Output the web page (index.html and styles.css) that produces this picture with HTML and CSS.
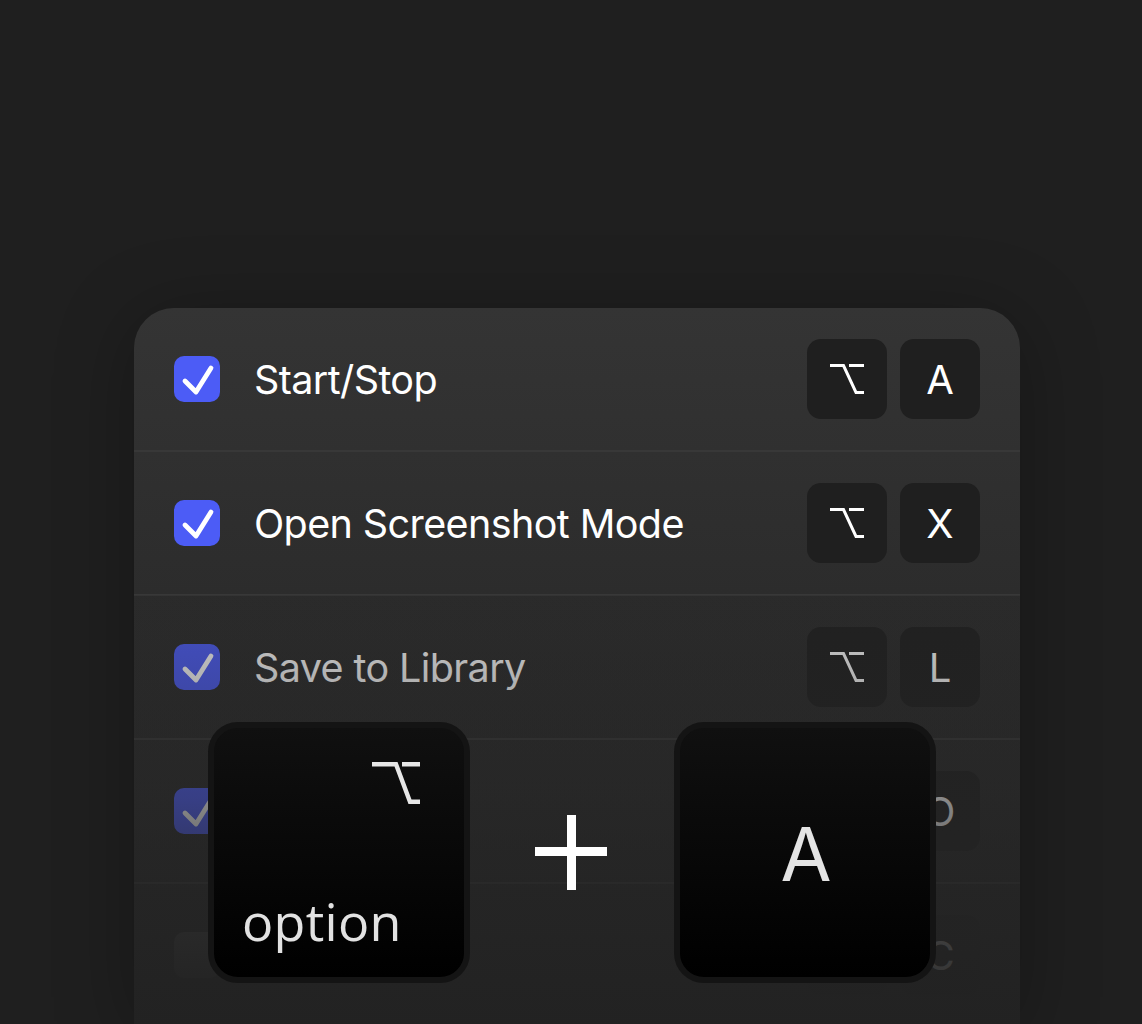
FILE: index.html
```html
<!DOCTYPE html>
<html>
<head>
<meta charset="utf-8">
<link rel="stylesheet" href="styles.css">
</head>
<body>
<div class="stage">
  <div class="panel">
    <div class="row">
      <span class="check on"><svg viewBox="0 0 46 46" width="46" height="46"><path d="M11 26 L22 37 L37 13" transform="translate(0,-1)"/></svg></span>
      <span class="label">Start/Stop</span>
      <span class="keys"><span class="key"><svg class="opt" viewBox="0 0 34 30" width="34" height="30"><path d="M0 1.5 H13.5 L26 28.5 H34 M19 1.5 H34"/></svg></span><span class="key">A</span></span>
    </div>
    <div class="row">
      <span class="check on"><svg viewBox="0 0 46 46" width="46" height="46"><path d="M11 26 L22 37 L37 13" transform="translate(0,-1)"/></svg></span>
      <span class="label">Open Screenshot Mode</span>
      <span class="keys"><span class="key"><svg class="opt" viewBox="0 0 34 30" width="34" height="30"><path d="M0 1.5 H13.5 L26 28.5 H34 M19 1.5 H34"/></svg></span><span class="key">X</span></span>
    </div>
    <div class="row">
      <span class="check on"><svg viewBox="0 0 46 46" width="46" height="46"><path d="M11 26 L22 37 L37 13" transform="translate(0,-1)"/></svg></span>
      <span class="label">Save to Library</span>
      <span class="keys"><span class="key"><svg class="opt" viewBox="0 0 34 30" width="34" height="30"><path d="M0 1.5 H13.5 L26 28.5 H34 M19 1.5 H34"/></svg></span><span class="key">L</span></span>
    </div>
    <div class="row">
      <span class="check on"><svg viewBox="0 0 46 46" width="46" height="46"><path d="M11 26 L22 37 L37 13" transform="translate(0,-1)"/></svg></span>
      <span class="label"></span>
      <span class="keys"><span class="key"><svg class="opt" viewBox="0 0 34 30" width="34" height="30"><path d="M0 1.5 H13.5 L26 28.5 H34 M19 1.5 H34"/></svg></span><span class="key">O</span></span>
    </div>
    <div class="row">
      <span class="check off"></span>
      <span class="label"></span>
      <span class="keys"><span class="key"><svg class="opt" viewBox="0 0 34 30" width="34" height="30"><path d="M0 1.5 H13.5 L26 28.5 H34 M19 1.5 H34"/></svg></span><span class="key">C</span></span>
    </div>
    <div class="fade"></div>
  </div>
  <div class="combo">
    <div class="bigkey option">
      <svg class="bigopt" viewBox="0 0 48 42" width="48" height="42"><path d="M0 2.2 H24 L38 39.8 H48 M30 2.2 H48"/></svg>
      <span class="optlabel">option</span>
    </div>
    <svg class="plus" viewBox="0 0 72 75" width="72" height="75"><rect x="0" y="32" width="72" height="9"/><rect x="32" y="0" width="9" height="75"/></svg>
    <div class="bigkey letter"><span class="bigA">A</span></div>
  </div>
</div>
</body>
</html>
```
FILE: styles.css
```css
html, body {
  margin: 0;
  padding: 0;
  background: #1f1f1f;
  height: 1024px;
  overflow: hidden;
}
.stage {
  position: relative;
  width: 1142px;
  height: 1024px;
  padding-top: 308px;
  box-sizing: border-box;
}
.panel {
  position: relative;
  margin-left: 134px;
  width: 886px;
  height: 716px;
  border-radius: 40px 40px 0 0;
  background: linear-gradient(#343434 0%, #2c2c2c 40%, #242424 100%);
  box-shadow: 0 10px 80px rgba(0, 0, 0, 0.28);
  overflow: hidden;
}
.row {
  display: flex;
  align-items: center;
  height: 142px;
  padding: 0 40px;
  border-bottom: 2px solid #383838;
}
.check {
  flex: none;
  width: 46px;
  height: 46px;
  border-radius: 10px;
  display: flex;
  align-items: center;
  justify-content: center;
}
.check.on {
  background: #4c5cf6;
}
.check.off {
  background: linear-gradient(#505050, #3a3a3a);
}
.check svg path {
  fill: none;
  stroke: #fff;
  stroke-width: 4.8;
  stroke-linecap: round;
  stroke-linejoin: round;
}
.label {
  flex: 1;
  margin-left: 34px;
  margin-top: 2px;
  font-family: Inter, "Liberation Sans", sans-serif;
  font-size: 39.5px;
  letter-spacing: -0.6px;
  color: #fff;
}
.keys {
  display: flex;
  gap: 13px;
}
.key {
  width: 80px;
  height: 80px;
  border-radius: 14px;
  background: #1f1f1f;
  display: flex;
  align-items: center;
  justify-content: center;
  font-family: Inter, "Liberation Sans", sans-serif;
  font-size: 40px;
  color: #fff;
}
.opt path {
  fill: none;
  stroke: #fff;
  stroke-width: 3;
}
.fade {
  position: absolute;
  left: 0;
  right: 0;
  top: 287px;
  bottom: 0;
  background: linear-gradient(rgba(38, 38, 38, 0.22) 0%, rgba(38, 38, 38, 0.55) 48%, rgba(36, 36, 36, 0.88) 78%, rgba(34, 34, 34, 0.95) 100%);
  pointer-events: none;
}
.combo {
  position: absolute;
  left: 208px;
  top: 722px;
  width: 728px;
  display: flex;
  align-items: center;
  justify-content: space-between;
}
.bigkey {
  width: 250px;
  height: 249px;
  border: 6px solid #141414;
  border-radius: 30px;
  background: linear-gradient(#101010, #000);
  position: relative;
}
.plus {
  margin-left: -2px;
}
.plus rect {
  fill: #fff;
}
.bigopt {
  position: absolute;
  right: 44px;
  top: 34px;
}
.bigopt path {
  fill: none;
  stroke: #e6e6e6;
  stroke-width: 4.4;
}
.optlabel {
  position: absolute;
  left: 28px;
  top: 157px;
  font-family: "Open Sans", sans-serif;
  font-size: 52px;
  color: #e2e2e2;
  letter-spacing: 0.3px;
}
.letter {
  display: flex;
  align-items: center;
  justify-content: center;
}
.bigA {
  font-family: Inter, sans-serif;
  font-size: 74px;
  color: #e4e4e4;
  margin-left: 2px;
  margin-top: 2px;
}
```
